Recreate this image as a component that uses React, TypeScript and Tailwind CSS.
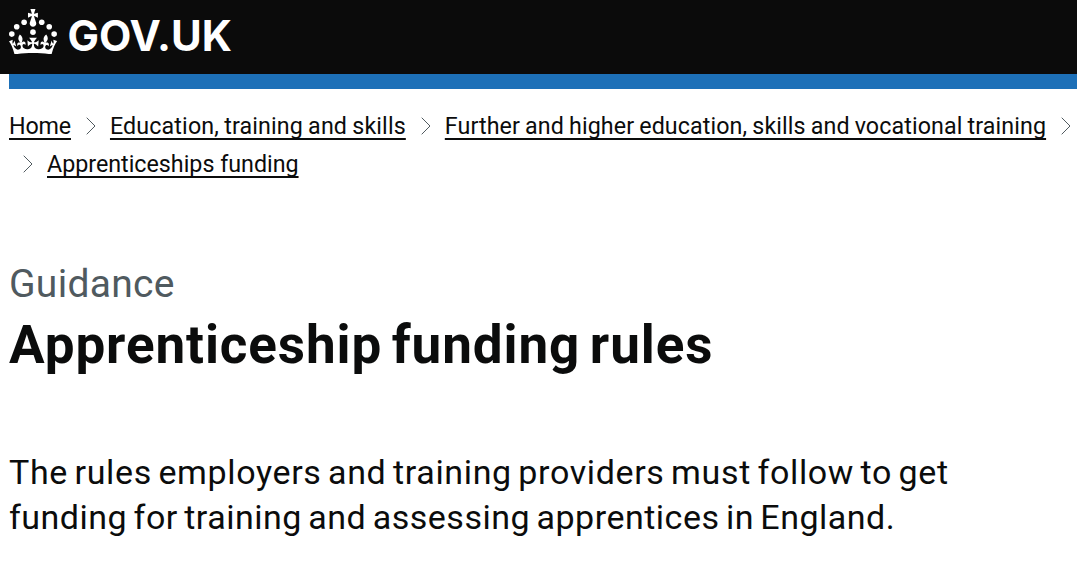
import { type ReactElement } from "react"

function Crown(): ReactElement {
  return (
    <svg viewBox="0 0 64 60" className="h-[45.4px] w-[48.4px] shrink-0" fill="currentColor" aria-hidden="true">
      <circle cx="20" cy="17.6" r="3.7" />
      <circle cx="10.2" cy="23.5" r="3.7" />
      <circle cx="3.7" cy="33.2" r="3.7" />
      <circle cx="31.7" cy="30.6" r="3.7" />
      <circle cx="43.3" cy="17.6" r="3.7" />
      <circle cx="53.2" cy="23.5" r="3.7" />
      <circle cx="59.7" cy="33.2" r="3.7" />
      <path d="M33.1,9.8c.2-.1.3-.3.5-.5l4.6,2.4v-6.8l-4.6,1.5c-.1-.2-.3-.3-.5-.5l1.9-5.9h-6.7l1.9,5.9c-.2.1-.3.3-.5.5l-4.6-1.5v6.8l4.6-2.4c.1.2.3.3.5.5l-2.6,8c-.9,2.8,1.2,5.7,4.1,5.7h0c3,0,5.1-2.9,4.1-5.7l-2.6-8ZM37,37.9s-3.4,3.8-4.1,6.1c2.2,0,4.2-.5,6.4-2.8l-.7,8.5c-2-2.8-4.4-4.1-5.7-3.8.1,3.1.5,6.7,5.8,7.2,3.7.3,6.7-1.5,7-3.8.4-2.6-2-4.3-3.7-1.6-1.4-4.5,2.4-6.1,4.9-3.2-1.9-4.5-1.8-7.7,2.4-10.9,3,4,2.6,7.3-1.2,11.1,2.4-1.3,6.2,0,4,4.6-1.2-2.8-3.7-2.2-4.2.2-.3,1.7.7,3.7,3,4.2,1.9.3,4.7-.9,7-5.9-1.3,0-2.4.7-3.9,1.7l2.4-8c.6,2.3,1.4,3.7,2.2,4.5.6-1.6.5-2.8,0-5.3l5,1.8c-2.6,3.6-5.2,8.7-7.3,17.5-7.4-1.1-15.7-1.7-24.5-1.7h0c-8.8,0-17.1.6-24.5,1.7-2.1-8.9-4.7-13.9-7.3-17.5l5-1.8c-.5,2.5-.6,3.7,0,5.3.8-.8,1.6-2.3,2.2-4.5l2.4,8c-1.5-1-2.6-1.7-3.9-1.7,2.3,5,5.2,6.2,7,5.9,2.3-.4,3.3-2.4,3-4.2-.5-2.4-3-3.1-4.2-.2-2.2-4.6,1.6-6,4-4.6-3.7-3.7-4.2-7.1-1.2-11.1,4.2,3.2,4.3,6.4,2.4,10.9,2.5-2.8,6.3-1.3,4.9,3.2-1.8-2.7-4.1-1-3.7,1.6.3,2.3,3.3,4.1,7,3.8,5.4-.5,5.7-4.2,5.8-7.2-1.3-.2-3.7,1-5.7,3.8l-.7-8.5c2.2,2.3,4.2,2.7,6.4,2.8-.7-2.3-4.1-6.1-4.1-6.1h10.6Z" />
    </svg>
  )
}

function Chevron(): ReactElement {
  return (
    <svg viewBox="0 0 10 18" className="mr-[14px] ml-[15px] h-[18px] w-[10px] shrink-0" fill="none" stroke="#505a5f" aria-hidden="true">
      <path d="M0.7 0.7 L9 9 L0.7 17.3" />
    </svg>
  )
}

const link = "underline decoration-2 underline-offset-[4px] [text-decoration-skip-ink:none]"

export default function App(): ReactElement {
  return (
    <div className="min-h-[582px] bg-white font-['Roboto',sans-serif] text-[#0b0c0c]">
      <header className="flex h-[74px] items-start bg-[#0b0b0b] pt-[9px] pl-[9px] text-white">
        <Crown />
        <span className="ml-[10px] font-['Inter',sans-serif] text-[42px] leading-[54px] font-bold">GOV.UK</span>
      </header>
      <div className="ml-[9px] h-[15px] bg-[#1d70b8]"></div>
      <main className="pl-[9px]">
        <nav className="pt-[18px] text-[23.25px] leading-[38px] whitespace-nowrap">
          <div className="flex items-center">
            <a className={`${link} tracking-[-0.15px]`}>Home</a>
            <Chevron />
            <a className={`${link} tracking-[0.13px] [word-spacing:-0.7px]`}>Education, training and skills</a>
            <Chevron />
            <a className={`${link} tracking-[0.1px] [word-spacing:-0.8px]`}>Further and higher education, skills and vocational training</a>
            <Chevron />
          </div>
          <div className="-ml-px flex items-center">
            <Chevron />
            <a className={link}>Apprenticeships funding</a>
          </div>
        </nav>
        <p className="mt-[77px] text-[39px] leading-[48px] tracking-[0.3px] text-[#505a5f]">Guidance</p>
        <h1 className="mt-[7px] text-[53px] leading-[60px] font-bold tracking-[0.9px] [word-spacing:-4.5px]">Apprenticeship funding rules</h1>
        <p className="mt-[75px] text-[34px] leading-[45px] tracking-[0.64px] whitespace-nowrap [word-spacing:-2.5px]">
          The rules employers and training providers must follow to get
          <br />
          <span className="tracking-[0.5px]">funding for training and assessing apprentices in England.</span>
        </p>
      </main>
    </div>
  )
}
